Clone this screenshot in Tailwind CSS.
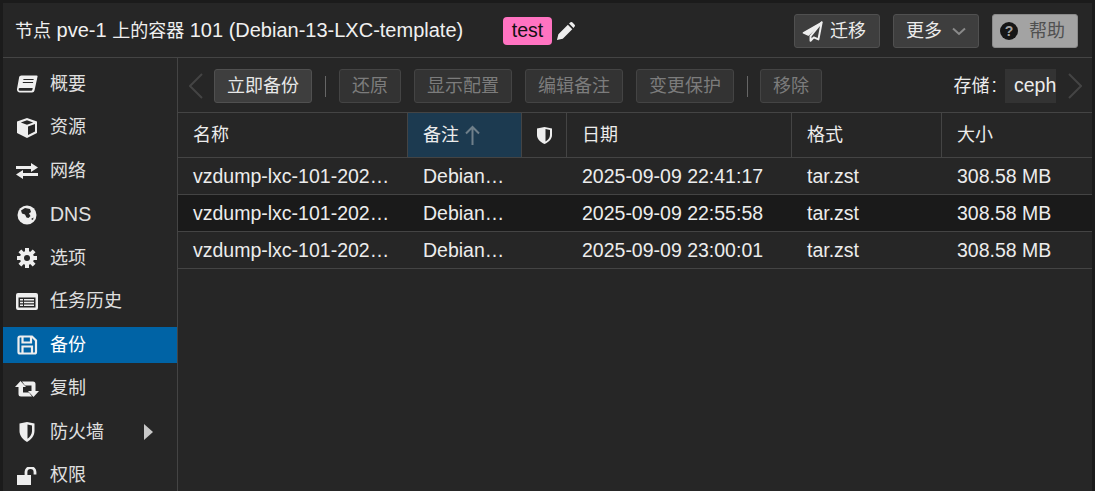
<!DOCTYPE html>
<html>
<head>
<meta charset="utf-8">
<script src="https://cdn.jsdelivr.net/npm/@tailwindcss/browser@4"></script>
<title>Backup</title>
</head>
<body class="h-screen overflow-hidden bg-[#1b1b1b] text-[#ececec] font-['Liberation_Sans','Noto_Sans_CJK_SC',sans-serif]">
<div class="ml-[3px] mr-[3px] mt-[3px] h-[488px] bg-[#262626] flex flex-col overflow-hidden">

  <!-- title bar -->
  <header class="h-[55px] shrink-0 flex items-center border-b border-[#444] pl-[12px] pr-[14px] pt-[2px]">
    <h1 class="text-[20px] leading-[24px] -mt-[2px] text-[#f0f0f0] whitespace-nowrap w-[488px]"><span class="text-[18px]">节点</span> pve-1 <span class="text-[18px]">上的容器</span> 101 (Debian-13-LXC-template)</h1>
    <span class="h-[28px] w-[49px] flex items-center justify-center rounded-[4px] bg-[#ff73c1] text-[#111] text-[19.500px]">test</span>
    <svg class="ml-[4px] w-[19px] h-[19px]" viewBox="0 0 16 16" fill="#eee"><path d="M.8 15.200 2 10.300 10 2.300 13.700 6 5.700 14zM11 1.300 11.900.5a1.400 1.400 0 0 1 2 0l1.600 1.600a1.400 1.400 0 0 1 0 2L14.700 5z"/></svg>
    <div class="ml-auto flex gap-[13px]">
      <button class="w-[86px] h-[34px] pl-[7px] flex items-center gap-[7px] rounded-[3px] border border-[#505050] bg-[#3e3e3e] text-[18px]">
        <svg class="w-[21px] h-[21px]" viewBox="0 0 16 16"><path d="M15 1 1 9 4.800 10.800z" fill="#eee" stroke="#eee" stroke-linejoin="round"/><path d="M15 1 6.500 11.500V15L9 12.500 12.500 14z" fill="none" stroke="#eee" stroke-width="1.500" stroke-linejoin="round"/></svg>迁移</button>
      <button class="w-[86px] h-[34px] flex items-center justify-center gap-[10px] rounded-[3px] border border-[#505050] bg-[#3e3e3e] text-[18px]">更多
        <svg class="w-[14px] h-[9px]" viewBox="0 0 14 9" fill="none" stroke="#8a8a8a" stroke-width="2"><path d="M1 1.500 7 7 13 1.500"/></svg></button>
      <button class="w-[86px] h-[34px] pl-[7px] flex items-center gap-[11px] rounded-[3px] border border-[#8a8a8a] bg-[#a3a3a3] text-[#505050] text-[18px]">
        <svg class="w-[18px] h-[18px]" viewBox="0 0 18 18"><circle cx="9" cy="9" r="9" fill="#161616"/><text x="9" y="14" text-anchor="middle" font-size="14" font-weight="700" fill="#a3a3a3" font-family="Liberation Sans">?</text></svg>帮助</button>
    </div>
  </header>

  <div class="flex flex-1 min-h-0">
    <!-- side nav -->
    <nav class="w-[175px] shrink-0 border-r border-[#444] pt-[8px] text-[18px] text-[#e0e0e0]">
      <a class="h-[36px] mb-[7.500px] flex items-center pl-[13px] gap-[12px]">
        <svg class="w-[22px] h-[18px]" viewBox="0 0 22 18" fill="#eee"><path fill-rule="evenodd" d="M6 .5h14.500a1 1 0 0 1 1 1.300L18.500 15.500a2.500 2.500 0 0 1-2.500 2H4a3 3 0 0 1-3-3.500L3 3a2.500 2.500 0 0 1 3-2.500zM7.500 4 7.300 5h10.200l.2-1zM6.900 7 6.700 8H17l.2-1zM4 13a1.300 1.300 0 0 0 0 2.800h11.200c.6 0 1-.3 1.200-1l.3-1.800z"/></svg><span>概要</span></a>
      <a class="h-[36px] mb-[7.500px] flex items-center pl-[13px] gap-[12px]">
        <svg class="w-[22px] h-[20px]" viewBox="0 0 22 20" fill="#eee"><path fill-rule="evenodd" d="M11 0 21 3.500V15L11 20 1 15V3.500zM11 2.300 4.800 4.400 11 6.700 17.200 4.400zM12 8.500V17L19 13.600V6z"/></svg><span>资源</span></a>
      <a class="h-[36px] mb-[7.500px] flex items-center pl-[13px] gap-[12px]">
        <svg class="w-[22px] h-[16px]" viewBox="0 0 22 16" fill="#eee"><path d="M0 3H15V0L22 4.500 15 9V6H0zM22 10H7V7L0 11.500 7 16V13H22z"/></svg><span>网络</span></a>
      <a class="h-[36px] mb-[7.500px] flex items-center pl-[13px] gap-[12px]">
        <svg class="w-[22px] h-[20px]" viewBox="0 0 22 20"><circle cx="11" cy="10" r="9.500" fill="#eee"/><path d="M5 5.500 9 3l5 1 1 3-2 1.500 1.500 2.500-2 2-2-.5L9 9.500 6 8.500zM15 14l2.500-1.500L17 15z" fill="#262626"/></svg><span class="text-[19.500px]">DNS</span></a>
      <a class="h-[36px] mb-[7.500px] flex items-center pl-[13px] gap-[12px]">
        <svg class="w-[22px] h-[20px]" viewBox="0 0 22 20"><g stroke="#eee" stroke-width="4"><path d="M11 0V20M1 10H21M3.900 2.900 18.100 17.100M18.100 2.900 3.900 17.100"/></g><circle cx="11" cy="10" r="7" fill="#eee"/><circle cx="11" cy="10" r="3" fill="#262626"/></svg><span>选项</span></a>
      <a class="h-[36px] mb-[7.500px] flex items-center pl-[13px] gap-[12px]">
        <svg class="w-[22px] h-[17px]" viewBox="0 0 22 17" fill="#eee"><path fill-rule="evenodd" d="M2 0h18a2 2 0 0 1 2 2v13a2 2 0 0 1-2 2H2a2 2 0 0 1-2-2V2a2 2 0 0 1 2-2zM2.500 4.500v10h17v-10zM4 6h3v1.500H4zM8 6h10v1.500H8zM4 8.800h3v1.500H4zM8 8.800h10v1.500H8zM4 11.600h3v1.500H4zM8 11.600h10v1.500H8z"/></svg><span>任务历史</span></a>
      <a class="h-[36px] mb-[7.500px] flex items-center pl-[13px] gap-[12px] bg-[#0063a5] text-white">
        <svg class="w-[22px] h-[20px]" viewBox="0 0 22 20" fill="none" stroke="#eee" stroke-width="2.200"><path d="M4 1.500H16L20 5.500V17A1.500 1.500 0 0 1 18.500 18.500H4A1.500 1.500 0 0 1 2.500 17V3A1.500 1.500 0 0 1 4 1.500z"/><path d="M6.500 2V7.500H15V2M6.500 18V11.500H16V18"/></svg><span>备份</span></a>
      <a class="h-[36px] mb-[7.500px] flex items-center pl-[12px] gap-[11px]">
        <svg class="w-[24px] h-[16px]" viewBox="0 0 24 16" fill="#eee"><path d="M5.500 0 11 6H8V11.500H14L17 15.500H6A2.500 2.500 0 0 1 3.500 13V6H0zM7 .5H18A2.500 2.500 0 0 1 20.500 3V10H24L18.500 16 13 10H16.500V4.500H10z"/></svg><span>复制</span></a>
      <a class="h-[36px] mb-[7.500px] flex items-center pl-[13px] gap-[12px]">
        <svg class="w-[22px] h-[20px]" viewBox="0 0 22 20"><path d="M3.500 1.500 11 0 18.500 1.500V9c0 5-3.500 8.500-7.500 11-4-2.500-7.500-6-7.500-11z" fill="#eee"/><path d="M11.500 2.500 16 3.500V9c0 3-1.800 5.800-4.500 7.800z" fill="#262626"/></svg>
        <span class="w-[82px]">防火墙</span>
        <svg class="w-[9px] h-[16px]" viewBox="0 0 9 16" fill="#c8c8c8"><path d="M0 0 9 8 0 16z"/></svg></a>
      <a class="h-[36px] flex items-center pl-[13px] gap-[12px]">
        <svg class="w-[22px] h-[18px]" viewBox="0 0 22 18" fill="#eee"><path d="M1 8h14v10H1z"/><path d="M10 8V5a4.500 4.500 0 0 1 9 0V7.500" fill="none" stroke="#eee" stroke-width="2.800"/></svg><span>权限</span></a>
    </nav>

    <main class="flex-1 min-w-0 flex flex-col">
      <!-- toolbar -->
      <div class="h-[55px] shrink-0 flex items-center border-b border-[#444] pt-[2px] text-[18px]">
        <svg class="ml-[11px] w-[14px] h-[26px]" viewBox="0 0 14 26" fill="none" stroke="#444" stroke-width="2"><path d="M13 1 1 13l12 12"/></svg>
        <button class="ml-[11px] w-[98px] h-[34px] rounded-[3px] border border-[#505050] bg-[#3e3e3e] text-[#e8e8e8]">立即备份</button>
        <span class="ml-[13px] mr-[13px] w-px h-[21px] bg-[#666]"></span>
        <button class="w-[62px] h-[34px] rounded-[3px] border border-[#444] bg-[#333] text-[#7c7c7c]">还原</button>
        <button class="ml-[13px] w-[98px] h-[34px] rounded-[3px] border border-[#444] bg-[#333] text-[#7c7c7c]">显示配置</button>
        <button class="ml-[13px] w-[98px] h-[34px] rounded-[3px] border border-[#444] bg-[#333] text-[#7c7c7c]">编辑备注</button>
        <button class="ml-[13px] w-[98px] h-[34px] rounded-[3px] border border-[#444] bg-[#333] text-[#7c7c7c]">变更保护</button>
        <span class="ml-[13px] mr-[12px] w-px h-[21px] bg-[#666]"></span>
        <button class="w-[62px] h-[34px] rounded-[3px] border border-[#444] bg-[#333] text-[#7c7c7c]">移除</button>
        <span class="ml-auto mr-[8px] whitespace-nowrap">存储<span class="ml-[2px] text-[19.500px]">:</span></span>
        <span class="w-[51px] h-[34px] pl-[9px] overflow-hidden flex items-center bg-[#333] text-[19.500px] whitespace-nowrap">ceph</span>
        <svg class="ml-[12px] mr-[10px] w-[14px] h-[26px]" viewBox="0 0 14 26" fill="none" stroke="#444" stroke-width="2"><path d="M1 1l12 12L1 25"/></svg>
      </div>

      <!-- backups grid -->
      <div class="grid grid-cols-[229px_114px_45px_225px_150px_151px] text-[19.500px] leading-[36px]">
        <div class="h-[45px] flex items-center pl-[15px] text-[18px] border-b border-[#444]">名称</div>
        <div class="h-[45px] flex items-center pl-[15px] text-[18px] border-l border-b border-[#444] bg-[#1c3a50]">备注
          <svg class="ml-[6px] w-[15px] h-[20px]" viewBox="0 0 15 20" fill="none" stroke="#6f7f8a" stroke-width="2"><path d="M7.500 20V2M1 8.500 7.500 2 14 8.500"/></svg></div>
        <div class="h-[45px] flex items-center justify-center border-l border-b border-[#444]">
          <svg class="w-[15px] h-[17px]" viewBox="0 0 15 17"><path d="M0 1.500 7.500 0 15 1.500V8c0 4-3 7-7.500 9C3 15 0 12 0 8z" fill="#eee"/><path d="M8.500 2 13 3V8c0 3-2 5-4.500 6.500z" fill="#262626"/></svg></div>
        <div class="h-[45px] flex items-center pl-[15px] text-[18px] border-l border-b border-[#444]">日期</div>
        <div class="h-[45px] flex items-center pl-[15px] text-[18px] border-l border-b border-[#444]">格式</div>
        <div class="h-[45px] flex items-center pl-[15px] text-[18px] border-l border-b border-[#444]">大小</div>

        <div class="h-[37px] pl-[15px] border-b border-[#444] whitespace-nowrap">vzdump-lxc-101-202…</div>
        <div class="h-[37px] pl-[16px] border-b border-[#444] whitespace-nowrap">Debian…</div>
        <div class="h-[37px] border-b border-[#444]"></div>
        <div class="h-[37px] pl-[16px] border-b border-[#444]">2025-09-09 22:41:17</div>
        <div class="h-[37px] pl-[16px] border-b border-[#444]">tar.zst</div>
        <div class="h-[37px] pl-[16px] border-b border-[#444]">308.58 MB</div>

        <div class="h-[37px] pl-[15px] border-b border-[#444] bg-[#1a1a1a] whitespace-nowrap">vzdump-lxc-101-202…</div>
        <div class="h-[37px] pl-[16px] border-b border-[#444] bg-[#1a1a1a] whitespace-nowrap">Debian…</div>
        <div class="h-[37px] border-b border-[#444] bg-[#1a1a1a]"></div>
        <div class="h-[37px] pl-[16px] border-b border-[#444] bg-[#1a1a1a]">2025-09-09 22:55:58</div>
        <div class="h-[37px] pl-[16px] border-b border-[#444] bg-[#1a1a1a]">tar.zst</div>
        <div class="h-[37px] pl-[16px] border-b border-[#444] bg-[#1a1a1a]">308.58 MB</div>

        <div class="h-[37px] pl-[15px] border-b border-[#444] whitespace-nowrap">vzdump-lxc-101-202…</div>
        <div class="h-[37px] pl-[16px] border-b border-[#444] whitespace-nowrap">Debian…</div>
        <div class="h-[37px] border-b border-[#444]"></div>
        <div class="h-[37px] pl-[16px] border-b border-[#444]">2025-09-09 23:00:01</div>
        <div class="h-[37px] pl-[16px] border-b border-[#444]">tar.zst</div>
        <div class="h-[37px] pl-[16px] border-b border-[#444]">308.58 MB</div>
      </div>
    </main>
  </div>
</div>
</body>
</html>
